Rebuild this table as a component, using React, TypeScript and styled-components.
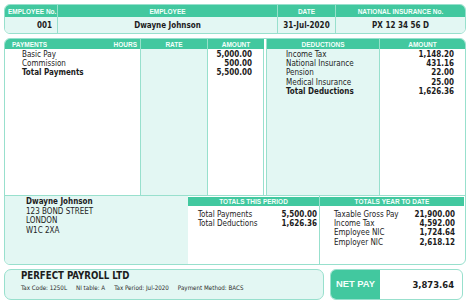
import React from "react";
import styled, { createGlobalStyle } from "styled-components";

const GREEN = "#42c89f";
const TEAL_BG = "#e3f7f3";
const BORDER = "#98e0cd";
const TEXT = "#1c1c1c";

const Global = createGlobalStyle`
  html, body { margin: 0; padding: 0; background: #ffffff; }
  body {
    font-family: "DejaVu Sans Condensed", "DejaVu Sans", Verdana, sans-serif;
    font-stretch: condensed;
    color: ${TEXT};
  }
  * { box-sizing: border-box; }
`;

const Page = styled.div`
  width: 474px;
  height: 307px;
  padding: 4px 8px 0 4px;
  display: flex;
  flex-direction: column;
  gap: 4px;
`;

const TopBox = styled.div`
  display: grid;
  grid-template-columns: 52px 220px 58px 1fr;
  grid-template-rows: 12px 16px;
  border: 1px solid ${BORDER};
  border-radius: 6px;
  overflow: hidden;
`;

const HeadCell = styled.div<{ $align?: string; $first?: boolean; $gap?: boolean }>`
  background: ${GREEN};
  color: #f4fffb;
  font-family: "Liberation Sans", Arial, sans-serif;
  font-weight: 700;
  font-size: 6.5px;
  display: flex;
  align-items: center;
  justify-content: ${(p) => p.$align || "center"};
  padding: 0 3px;
  white-space: nowrap;
  border-left: ${(p) => (p.$first ? "none" : "1px solid rgba(255,255,255,0.45)")};
  margin-left: ${(p) => (p.$gap ? "2px" : "0")};
`;

const ValueCell = styled.div<{ $align?: string; $first?: boolean }>`
  background: ${TEAL_BG};
  font-weight: 700;
  font-size: 8px;
  display: flex;
  align-items: center;
  justify-content: ${(p) => p.$align || "center"};
  padding: 0 5px;
  border-left: ${(p) => (p.$first ? "none" : `1px solid ${BORDER}`)};
`;

const MainBox = styled.div`
  height: 227px;
  border: 1px solid ${BORDER};
  border-radius: 6px;
  overflow: hidden;
  display: flex;
  flex-direction: column;
`;

const PayArea = styled.div`
  height: 157px;
  display: grid;
  grid-template-columns: 135px 67px 57px 115px 1fr;
  grid-template-rows: 10px 1fr;
  border-bottom: 1px solid ${BORDER};
`;

const ColBody = styled.div<{
  $tint?: boolean;
  $right?: boolean;
  $padL?: number;
  $padR?: number;
  $first?: boolean;
  $gap?: boolean;
  $borderRight?: boolean;
}>`
  background: ${(p) => (p.$tint ? TEAL_BG : "#ffffff")};
  font-size: 8px;
  line-height: 9.2px;
  padding: 1px ${(p) => p.$padR ?? 0}px 0 ${(p) => p.$padL ?? 0}px;
  text-align: ${(p) => (p.$right ? "right" : "left")};
  border-left: ${(p) => (p.$first ? "none" : `1px solid ${BORDER}`)};
  border-right: ${(p) => (p.$borderRight ? `1px solid ${BORDER}` : "none")};
  margin-left: ${(p) => (p.$gap ? "2px" : "0")};
  white-space: nowrap;
`;

const Line = styled.div<{ $bold?: boolean }>`
  font-weight: ${(p) => (p.$bold ? 700 : 400)};
`;

const BottomArea = styled.div`
  flex: 1;
  display: grid;
  grid-template-columns: 183px 131px 1fr;
`;

const Address = styled.div`
  background: ${TEAL_BG};
  padding: 1px 0 0 21px;
  font-size: 8px;
  line-height: 9.7px;
`;

const TotalsCol = styled.div<{ $divider?: boolean; $endPad?: boolean }>`
  display: flex;
  flex-direction: column;
  padding-top: 1px;
  padding-right: ${(p) => (p.$endPad ? "1px" : "0")};
  border-left: ${(p) => (p.$divider ? `1px solid ${BORDER}` : "none")};
`;

const TotalsHead = styled.div`
  height: 9px;
  background: ${GREEN};
  color: #f4fffb;
  font-family: "Liberation Sans", Arial, sans-serif;
  font-weight: 700;
  font-size: 6.5px;
  display: flex;
  align-items: center;
  justify-content: center;
  white-space: nowrap;
`;

const TotalsBody = styled.div<{ $padL: number; $padR: number }>`
  display: grid;
  grid-template-columns: 1fr auto;
  padding: 4px ${(p) => p.$padR}px 0 ${(p) => p.$padL}px;
  font-size: 8px;
  line-height: 9.2px;
  white-space: nowrap;
`;

const Amount = styled.span`
  font-weight: 700;
  text-align: right;
`;

const Footer = styled.div`
  height: 31px;
  display: flex;
  gap: 6px;
`;

const Company = styled.div`
  width: 320px;
  background: ${TEAL_BG};
  border: 1px solid ${BORDER};
  border-radius: 7px;
  padding: 0 16px;
  display: flex;
  flex-direction: column;
`;

const CompanyName = styled.div`
  font-weight: 700;
  font-size: 9.6px;
  line-height: 12px;
`;

const TaxLine = styled.div`
  margin-top: 2px;
  font-size: 6.2px;
  line-height: 8px;
  display: flex;
  gap: 9px;
  white-space: nowrap;
  color: #2a2a2a;
`;

const NetPay = styled.div`
  width: 133px;
  border: 1px solid ${BORDER};
  border-radius: 6px;
  overflow: hidden;
  display: flex;
`;

const NetLabel = styled.div`
  width: 49px;
  background: ${GREEN};
  color: #f4fffb;
  font-family: "Liberation Sans", Arial, sans-serif;
  font-weight: 700;
  font-size: 9.4px;
  display: flex;
  align-items: center;
  justify-content: center;
  padding-bottom: 2px;
`;

const NetAmount = styled.div`
  flex: 1;
  display: flex;
  align-items: center;
  justify-content: flex-end;
  padding-right: 8px;
  font-weight: 700;
  font-size: 9.4px;
`;

const payments = [
  { label: "Basic Pay", amount: "5,000.00" },
  { label: "Commission", amount: "500.00" },
  { label: "Total Payments", amount: "5,500.00", bold: true },
];

const deductions = [
  { label: "Income Tax", amount: "1,148.20" },
  { label: "National Insurance", amount: "431.16" },
  { label: "Pension", amount: "22.00" },
  { label: "Medical Insurance", amount: "25.00" },
  { label: "Total Deductions", amount: "1,626.36", bold: true },
];

const period = [
  ["Total Payments", "5,500.00"],
  ["Total Deductions", "1,626.36"],
];

const ytd = [
  ["Taxable Gross Pay", "21,900.00"],
  ["Income Tax", "4,592.00"],
  ["Employee NIC", "1,724.64"],
  ["Employer NIC", "2,618.12"],
];

export default function App() {
  return (
    <>
      <Global />
      <Page>
        <TopBox>
          <HeadCell $first $align="flex-start">EMPLOYEE No.</HeadCell>
          <HeadCell>EMPLOYEE</HeadCell>
          <HeadCell>DATE</HeadCell>
          <HeadCell>NATIONAL INSURANCE No.</HeadCell>
          <ValueCell $first $align="flex-end">001</ValueCell>
          <ValueCell>Dwayne Johnson</ValueCell>
          <ValueCell>31-Jul-2020</ValueCell>
          <ValueCell>PX 12 34 56 D</ValueCell>
        </TopBox>

        <MainBox>
          <PayArea>
            <HeadCell $first $align="space-between" style={{ padding: "0 3px 0 7px" }}>
              <span>PAYMENTS</span>
              <span>HOURS</span>
            </HeadCell>
            <HeadCell>RATE</HeadCell>
            <HeadCell>AMOUNT</HeadCell>
            <HeadCell $gap>DEDUCTIONS</HeadCell>
            <HeadCell>AMOUNT</HeadCell>

            <ColBody $first $padL={17}>
              {payments.map((p) => (
                <Line key={p.label} $bold={p.bold}>{p.label}</Line>
              ))}
            </ColBody>
            <ColBody $tint />
            <ColBody $right $padR={11} $borderRight>
              {payments.map((p) => (
                <Line key={p.label} $bold>{p.amount}</Line>
              ))}
            </ColBody>
            <ColBody $tint $gap $padL={19}>
              {deductions.map((d) => (
                <Line key={d.label} $bold={d.bold}>{d.label}</Line>
              ))}
            </ColBody>
            <ColBody $right $padR={11}>
              {deductions.map((d) => (
                <Line key={d.label} $bold>{d.amount}</Line>
              ))}
            </ColBody>
          </PayArea>

          <BottomArea>
            <Address>
              <Line $bold>Dwayne Johnson</Line>
              <Line>123 BOND STREET</Line>
              <Line>LONDON</Line>
              <Line>W1C 2XA</Line>
            </Address>
            <TotalsCol>
              <TotalsHead>TOTALS THIS PERIOD</TotalsHead>
              <TotalsBody $padL={10} $padR={2}>
                {period.map(([l, v]) => (
                  <React.Fragment key={l}>
                    <span>{l}</span>
                    <Amount>{v}</Amount>
                  </React.Fragment>
                ))}
              </TotalsBody>
            </TotalsCol>
            <TotalsCol $divider $endPad>
              <TotalsHead>TOTALS YEAR TO DATE</TotalsHead>
              <TotalsBody $padL={14} $padR={9}>
                {ytd.map(([l, v]) => (
                  <React.Fragment key={l}>
                    <span>{l}</span>
                    <Amount>{v}</Amount>
                  </React.Fragment>
                ))}
              </TotalsBody>
            </TotalsCol>
          </BottomArea>
        </MainBox>

        <Footer>
          <Company>
            <CompanyName>PERFECT PAYROLL LTD</CompanyName>
            <TaxLine>
              <span>Tax Code: 1250L</span>
              <span>NI table: A</span>
              <span>Tax Period: Jul-2020</span>
              <span>Payment Method: BACS</span>
            </TaxLine>
          </Company>
          <NetPay>
            <NetLabel>NET PAY</NetLabel>
            <NetAmount>3,873.64</NetAmount>
          </NetPay>
        </Footer>
      </Page>
    </>
  );
}
